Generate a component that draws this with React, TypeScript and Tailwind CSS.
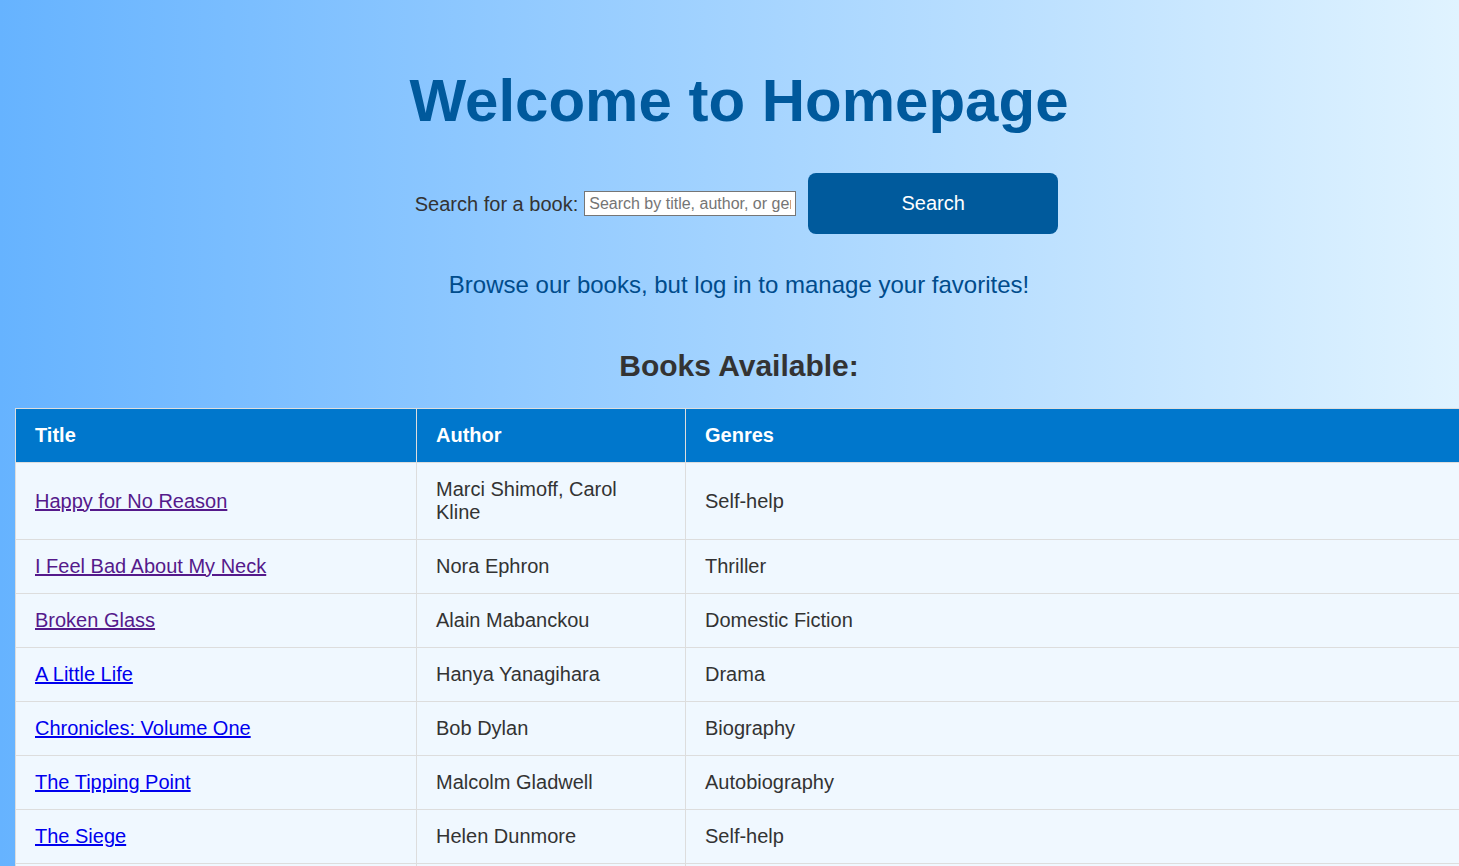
import React from "react";

const books = [
  { title: "Happy for No Reason", author: "Marci Shimoff, Carol Kline", genre: "Self-help", visited: true },
  { title: "I Feel Bad About My Neck", author: "Nora Ephron", genre: "Thriller", visited: true },
  { title: "Broken Glass", author: "Alain Mabanckou", genre: "Domestic Fiction", visited: true },
  { title: "A Little Life", author: "Hanya Yanagihara", genre: "Drama", visited: false },
  { title: "Chronicles: Volume One", author: "Bob Dylan", genre: "Biography", visited: false },
  { title: "The Tipping Point", author: "Malcolm Gladwell", genre: "Autobiography", visited: false },
  { title: "The Siege", author: "Helen Dunmore", genre: "Self-help", visited: false },
];

export default function App() {
  return (
    <div
      className="w-[1459px] h-[866px] overflow-hidden bg-[linear-gradient(to_right,#66b3ff,#e0f3ff)] text-[#333]"
      style={{ fontFamily: '"Liberation Sans", Arial, sans-serif' }}
    >
      <div className="ml-[15px] w-[1448px] pt-[66px]">
        <h1 className="text-center text-[60px] font-bold leading-[70px] text-[#00599c]">Welcome to Homepage</h1>
        <div className="mt-[37px] flex items-center justify-center pr-[5px]">
          <label className="text-[20px] text-[#333]">Search for a book:</label>
          <input
            type="text"
            placeholder="Search by title, author, or genre"
            className="ml-[6px] h-[25px] w-[212px] border border-[#767676] bg-white px-[4px] text-[16px] placeholder:text-[#757575]"
            style={{ fontFamily: '"Liberation Sans", Arial, sans-serif' }}
          />
          <button className="ml-[12px] h-[61px] w-[250px] rounded-[8px] bg-[#005a9c] pb-[2px] text-[20px] text-white">
            Search
          </button>
        </div>
        <p className="mt-[37px] text-center text-[24px] leading-[28px] text-[#004c8c]">
          Browse our books, but log in to manage your favorites!
        </p>
        <h2 className="mt-[49px] text-center text-[30px] font-bold leading-[36px] text-[#333]">Books Available:</h2>
        <table className="mt-[24px] w-full border-collapse bg-[#f0f8ff] text-[20px]">
          <thead>
            <tr className="bg-[#0077cc] text-white">
              <th className="w-[401px] border border-[#ddd] px-[19px] py-[15px] text-left font-bold leading-[23px]">Title</th>
              <th className="w-[269px] border border-[#ddd] px-[19px] py-[15px] text-left font-bold leading-[23px]">Author</th>
              <th className="border border-[#ddd] px-[19px] py-[15px] text-left font-bold leading-[23px]">Genres</th>
            </tr>
          </thead>
          <tbody>
            {books.map((b) => (
              <tr key={b.title}>
                <td className="border border-[#ddd] px-[19px] py-[15px] leading-[23px]">
                  <a
                    href="#"
                    className={b.visited ? "text-[#551a8b] underline" : "text-[#0000ee] underline"}
                  >
                    {b.title}
                  </a>
                </td>
                <td className="border border-[#ddd] px-[19px] py-[15px] leading-[23px] text-[#333]">{b.author}</td>
                <td className="border border-[#ddd] px-[19px] py-[15px] leading-[23px] text-[#333]">{b.genre}</td>
              </tr>
            ))}
            <tr>
              <td className="h-[54px] border border-[#ddd]"></td>
              <td className="h-[54px] border border-[#ddd]"></td>
              <td className="h-[54px] border border-[#ddd]"></td>
            </tr>
          </tbody>
        </table>
      </div>
    </div>
  );
}
